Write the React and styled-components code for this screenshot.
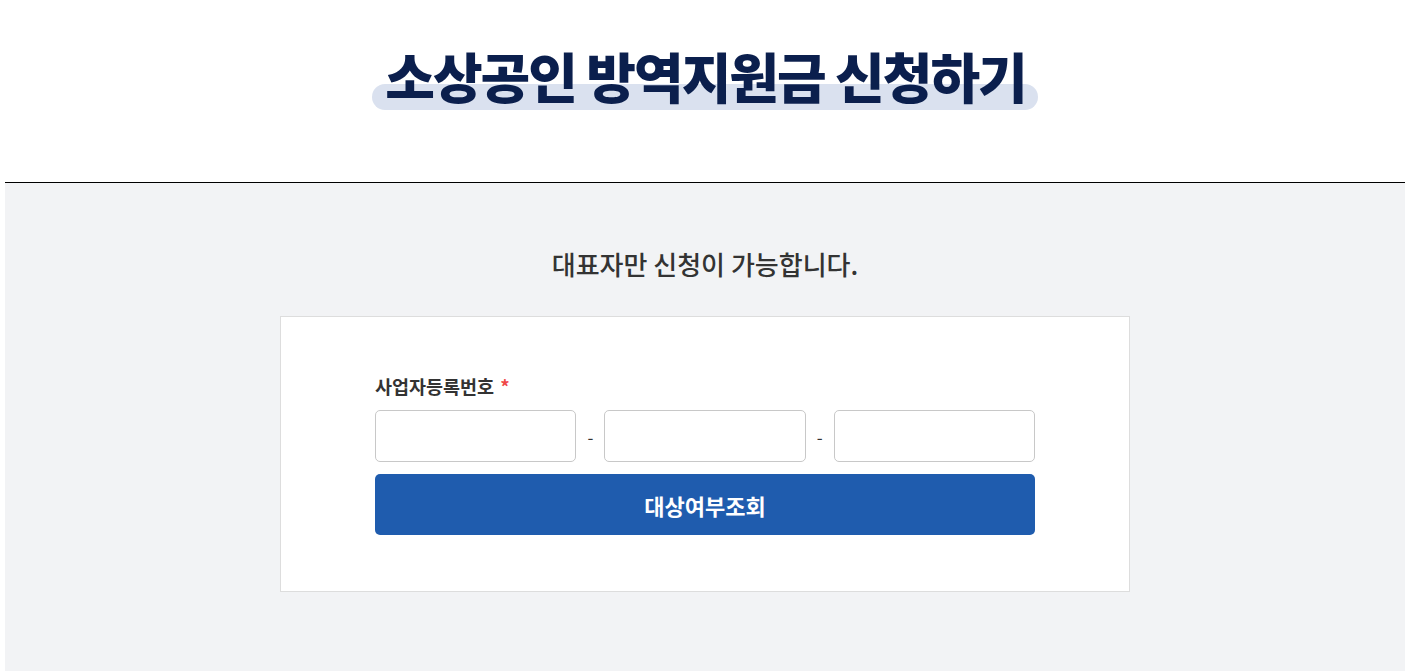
import React from 'react'
import styled, { createGlobalStyle } from 'styled-components'

const GlobalStyle = createGlobalStyle`
  * {
    box-sizing: border-box;
  }

  body {
    margin: 0;
    background: #fff;
    font-family: "Noto Sans CJK KR", "Noto Sans", sans-serif;
    color: #333;
  }
`

const Page = styled.div`
  width: 1400px;
  margin-left: 5px;
`

const Header = styled.header`
  height: 183px;
  border-bottom: 1px solid #000;
  display: flex;
  justify-content: center;
  padding-top: 40px;
`

const Title = styled.h1`
  position: relative;
  margin: 0;
  height: 72px;
  padding: 0 12px 0 13px;
  font-size: 54px;
  line-height: 72px;
  font-weight: 900;
  letter-spacing: -2px;
  color: #0b1f4d;
  z-index: 0;

  &::before {
    content: '';
    position: absolute;
    left: 0;
    right: 0;
    bottom: 2px;
    height: 26px;
    border-radius: 13px;
    background: #dae1ef;
    z-index: -1;
  }
`

const Body = styled.main`
  background: #f2f3f5;
  min-height: calc(100vh - 183px);
  padding: 62px 0 80px;
`

const Notice = styled.p`
  margin: 0 0 34px;
  text-align: center;
  font-size: 26px;
  line-height: 37px;
  font-weight: 500;
  color: #333;
`

const Card = styled.section`
  width: 850px;
  margin: 0 auto;
  padding: 57px 94px 56px 94px;
  background: #fff;
  border: 1px solid #ddd;
`

const Label = styled.label`
  display: block;
  margin-bottom: 12px;
  font-size: 18.5px;
  line-height: 24px;
  font-weight: 700;
  color: #333;

  span {
    color: #f04848;
    margin-left: 6px;
  }
`

const InputRow = styled.div`
  display: flex;
  align-items: center;
`

const Input = styled.input`
  flex: 1;
  min-width: 0;
  height: 52px;
  border: 1px solid #c8c8c8;
  border-radius: 5px;
  padding: 0 14px;
  font-size: 16px;
  font-family: inherit;
  background: #fff;
  outline: none;
`

const Dash = styled.span`
  width: 28px;
  text-align: center;
  font-size: 17px;
  color: #333;
`

const SubmitButton = styled.button`
  display: block;
  width: 100%;
  height: 61px;
  margin-top: 12px;
  border: none;
  border-radius: 5px;
  background: #1f5cae;
  color: #fff;
  font-family: inherit;
  font-size: 22px;
  font-weight: 700;
  cursor: pointer;
`

const App = () => {
  return (
    <Page>
      <GlobalStyle />
      <Header>
        <Title>소상공인 방역지원금 신청하기</Title>
      </Header>
      <Body>
        <Notice>대표자만 신청이 가능합니다.</Notice>
        <Card>
          <Label>사업자등록번호<span>*</span></Label>
          <InputRow>
            <Input type="text" maxLength={3} />
            <Dash>-</Dash>
            <Input type="text" maxLength={2} />
            <Dash>-</Dash>
            <Input type="text" maxLength={5} />
          </InputRow>
          <SubmitButton type="button">대상여부조회</SubmitButton>
        </Card>
      </Body>
    </Page>
  )
}

export default App
